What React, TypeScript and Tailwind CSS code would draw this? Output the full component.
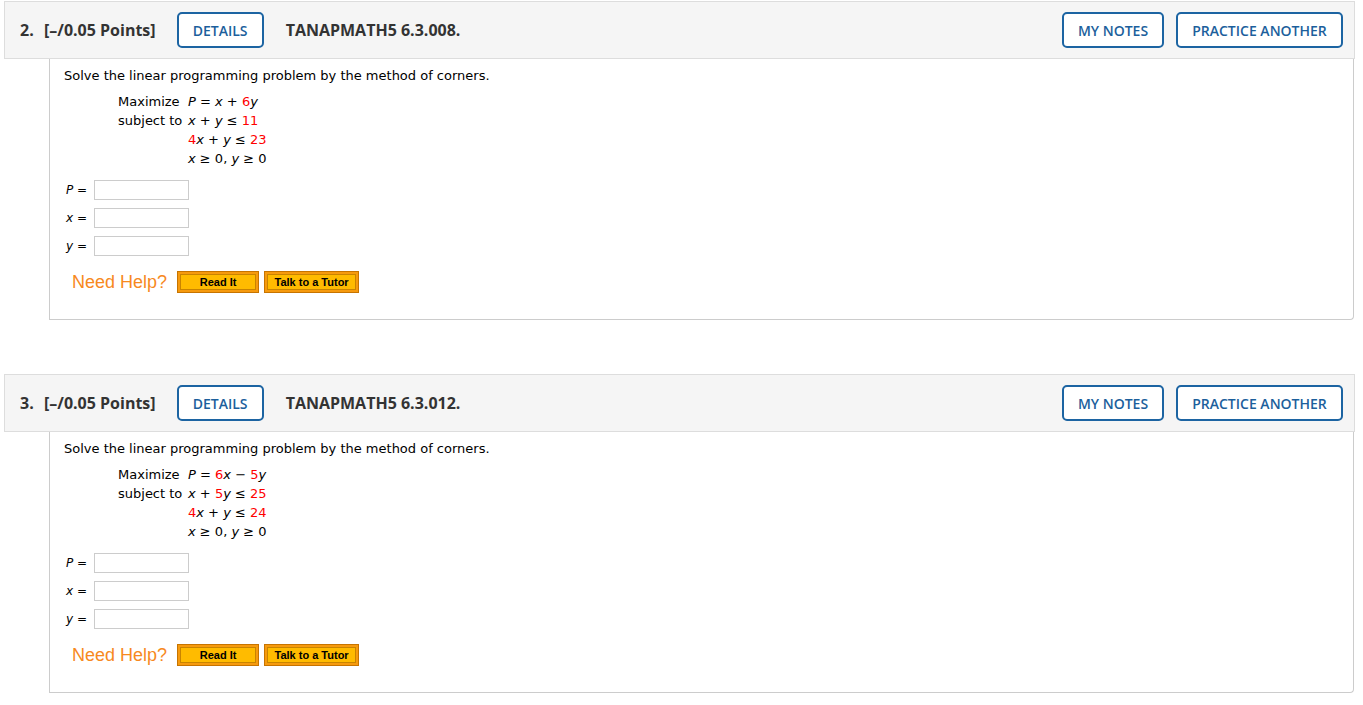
import React from 'react';

type Term = { t: string; red?: boolean; it?: boolean };

interface Problem {
    num: number;
    code: string;
    objective: Term[];
    constraints: Term[][];
}

const R = (t: string): Term => ({ t, red: true });
const I = (t: string): Term => ({ t, it: true });
const N = (t: string): Term => ({ t });

const problems: Problem[] = [
    {
        num: 2,
        code: 'TANAPMATH5 6.3.008.',
        objective: [I('P'), N(' = '), I('x'), N(' + '), R('6'), I('y')],
        constraints: [
            [I('x'), N(' + '), I('y'), N(' ≤ '), R('11')],
            [R('4'), I('x'), N(' + '), I('y'), N(' ≤ '), R('23')],
            [I('x'), N(' ≥ 0, '), I('y'), N(' ≥ 0')],
        ],
    },
    {
        num: 3,
        code: 'TANAPMATH5 6.3.012.',
        objective: [I('P'), N(' = '), R('6'), I('x'), N(' − '), R('5'), I('y')],
        constraints: [
            [I('x'), N(' + '), R('5'), I('y'), N(' ≤ '), R('25')],
            [R('4'), I('x'), N(' + '), I('y'), N(' ≤ '), R('24')],
            [I('x'), N(' ≥ 0, '), I('y'), N(' ≥ 0')],
        ],
    },
];

const Expr: React.FC<{ terms: Term[] }> = ({ terms }) => (
    <span className="whitespace-pre">
        {terms.map((term, i) => (
            <span key={i} className={`${term.red ? 'text-[#ff0000]' : ''} ${term.it ? 'italic' : ''}`}>
                {term.t}
            </span>
        ))}
    </span>
);

const OutlineButton: React.FC<{ label: string; width: string }> = ({ label, width }) => (
    <button
        className={`${width} h-[36px] rounded-[5px] border-2 border-[#1c64a2] bg-white text-[14px] font-semibold text-[#1c5f9c] flex items-center justify-center`}
    >
        {label}
    </button>
);

const HelpButton: React.FC<{ label: string; width: string }> = ({ label, width }) => (
    <button className={`${width} h-[22px] border border-[#c77400] bg-[#f69a0e] p-[2px] flex`}>
        <span className="flex-1 flex items-center justify-center border border-[#c98400] bg-[#ffbb00] text-[11px] font-bold text-black leading-none [font-family:'Liberation_Sans',Arial,sans-serif]">
            {label}
        </span>
    </button>
);

const ProblemBlock: React.FC<{ p: Problem }> = ({ p }) => (
    <div>
        <div className="h-[58px] border border-[#dddddd] bg-[#f5f5f5] flex items-center pl-[15px] pr-[11px] text-[#333333] [font-family:'Open_Sans',sans-serif]">
            <span className="text-[16px] font-bold w-[24px]">{p.num}.</span>
            <span className="text-[16px] font-bold">[–/0.05 Points]</span>
            <div className="ml-[21px]">
                <OutlineButton label="DETAILS" width="w-[87px]" />
            </div>
            <span className="ml-[22px] text-[16px] font-bold">{p.code}</span>
            <div className="ml-auto flex gap-[12px]">
                <OutlineButton label="MY NOTES" width="w-[102px]" />
                <OutlineButton label="PRACTICE ANOTHER" width="w-[167px]" />
            </div>
        </div>

        <div className="ml-[45px] mr-[1px] border-l border-r border-b border-[#cccccc] rounded-br-[4px] pl-[14px] pt-[7px] pb-[26px] text-[13px] leading-[19px] text-black [font-family:'DejaVu_Sans',Verdana,sans-serif]">
            <p>Solve the linear programming problem by the method of corners.</p>

            <div className="mt-[7px] ml-[54px] grid grid-cols-[70px_auto] w-max">
                <span>Maximize</span>
                <Expr terms={p.objective} />
                <span>subject to</span>
                <Expr terms={p.constraints[0]} />
                <span />
                <Expr terms={p.constraints[1]} />
                <span />
                <Expr terms={p.constraints[2]} />
            </div>

            <div className="mt-[12px] flex flex-col gap-[8px]">
                {['P', 'x', 'y'].map((v) => (
                    <div key={v} className="flex items-center">
                        <span className="w-[30px] pl-[2px] text-[12px] whitespace-pre">
                            <span className="italic">{v}</span> =
                        </span>
                        <input
                            type="text"
                            className="w-[95px] h-[20px] border border-[#cccccc] bg-white outline-none"
                        />
                    </div>
                ))}
            </div>

            <div className="mt-[15px] ml-[8px] flex items-center">
                <span className="text-[18px] font-medium text-[#f7891e] [font-family:'Liberation_Sans',Arial,sans-serif] leading-none">
                    Need Help?
                </span>
                <div className="ml-[10px] flex gap-[5px]">
                    <HelpButton label="Read It" width="w-[82px]" />
                    <HelpButton label="Talk to a Tutor" width="w-[95px]" />
                </div>
            </div>
        </div>
    </div>
);

export default function App() {
    return (
        <div className="min-h-screen bg-white">
            <div className="w-[1351px] ml-[4px] pt-[1px] flex flex-col gap-[54px]">
                {problems.map((p) => (
                    <ProblemBlock key={p.num} p={p} />
                ))}
            </div>
        </div>
    );
}
